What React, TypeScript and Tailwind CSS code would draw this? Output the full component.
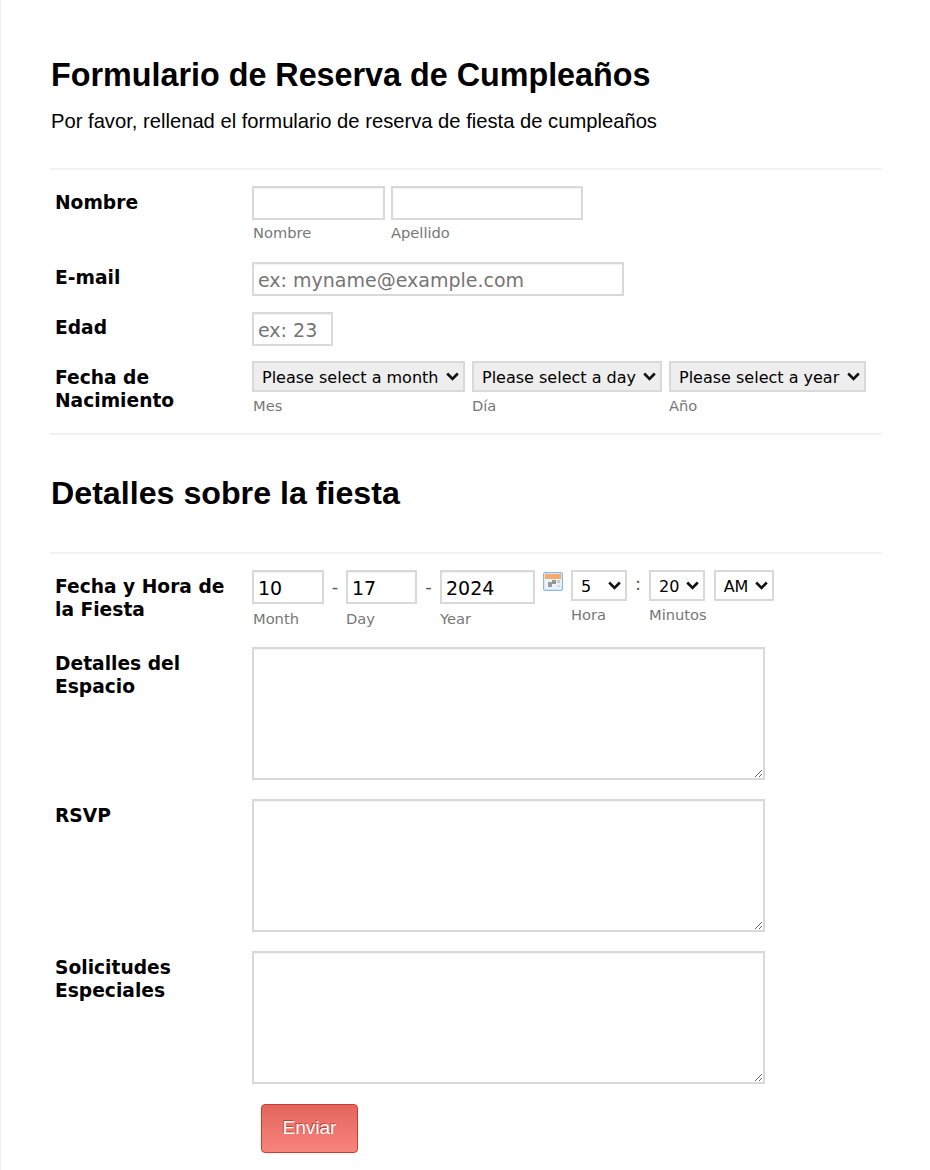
import type { ReactNode } from "react"

const labelClass = "w-[202px] shrink-0 pl-[5px] text-[18.67px] leading-[23px] font-bold text-black"
const inputClass = "h-[34px] border-2 border-[#d9d9d9] bg-white px-[4px] pt-px text-[19px] text-black shadow-[inset_0_1px_1px_#f2f2f2] outline-none placeholder:text-[#757575]"
const subClass = "mt-[4px] block text-[14.67px] leading-[18px] text-[#777777]"
const selectSubClass = "mt-[5px] block text-[14.67px] leading-[18px] text-[#777777]"
const areaClass = "block h-[133px] w-[513px] border-2 border-[#d9d9d9] bg-white shadow-[inset_0_1px_1px_#f2f2f2]"

function CalendarIcon() {
  return (
    <svg width="20" height="19" viewBox="0 0 20 19" className="mt-[2px] shrink-0">
      <rect x="0.5" y="0.5" width="19" height="18" rx="1.5" fill="#d5e6f6" stroke="#8fb6de" />
      <rect x="2" y="2" width="16" height="5" fill="#f4ab6c" />
      <rect x="2" y="7" width="16" height="10" fill="#eaf3fa" />
      <rect x="5" y="10" width="4" height="5" fill="#9c9c9c" />
      <rect x="9" y="8" width="4" height="4" fill="#8f9a8c" />
      <rect x="14" y="8" width="3" height="3" fill="#c2cbd3" />
      <rect x="14" y="13" width="3" height="2" fill="#cfd8e0" />
    </svg>
  )
}

function Select({ value, width, gray }: { value: string; width: string; gray?: boolean }) {
  return (
    <div className={"relative h-[31px] " + width}>
      <select
        defaultValue={value}
        className={
          "h-full w-full appearance-none border-2 border-[#d9d9d9] pt-[2px] pl-[8px] text-[16px] text-black " +
          (gray ? "bg-[#eeeeee]" : "bg-white")
        }
      >
        <option>{value}</option>
      </select>
      <svg
        width="13"
        height="9"
        viewBox="0 0 13 9"
        className="pointer-events-none absolute top-[11px] right-[6px]"
        fill="none"
        stroke="#111111"
        strokeWidth="2.6"
      >
        <path d="M1.2 1.5 6.5 6.8 11.8 1.5" />
      </svg>
    </div>
  )
}

function TextAreaRow({ label }: { label: ReactNode }) {
  return (
    <div className="flex">
      <label className={labelClass + " pt-[5px]"}>{label}</label>
      <textarea className={areaClass} />
    </div>
  )
}

export default function App() {
  return (
    <div className="min-h-[1170px] bg-white border-l border-[#f0f0f0] pl-[49px] pr-[49px] pt-[57px]" style={{ fontFamily: '"DejaVu Sans", sans-serif' }}>
      <h1 className="ml-px font-['Liberation_Sans',sans-serif] text-[32.3px] leading-[37px] font-bold text-black">
        Formulario de Reserva de Cumpleaños
      </h1>
      <p className="mt-[16px] ml-px font-['Liberation_Sans',sans-serif] text-[20.2px] leading-[23px] text-black">
        Por favor, rellenad el formulario de reserva de fiesta de cumpleaños
      </p>

      <div className="mt-[35px] border-t-2 border-[#f1f1f1] pt-[16px]">
        {/* Nombre */}
        <div className="flex">
          <label className={labelClass + " pt-[5px]"}>Nombre</label>
          <div className="flex gap-[6px]">
            <div>
              <input className={inputClass + " w-[133px]"} />
              <span className={subClass + " ml-px"}>Nombre</span>
            </div>
            <div>
              <input className={inputClass + " w-[192px]"} />
              <span className={subClass}>Apellido</span>
            </div>
          </div>
        </div>

        {/* E-mail */}
        <div className="mt-[20px] flex">
          <label className={labelClass + " pt-[4px]"}>E-mail</label>
          <input className={inputClass + " w-[372px]"} placeholder="ex: myname@example.com" />
        </div>

        {/* Edad */}
        <div className="mt-[16px] flex">
          <label className={labelClass + " pt-[4px]"}>Edad</label>
          <input className={inputClass + " w-[81px]"} placeholder="ex: 23" />
        </div>

        {/* Fecha de Nacimiento */}
        <div className="mt-[15px] flex">
          <label className={labelClass + " pt-[5px]"}>
            Fecha de
            <br />
            Nacimiento
          </label>
          <div className="flex gap-[7px]">
            <div>
              <Select value="Please select a month" width="w-[213px]" gray />
              <span className={selectSubClass + " ml-px"}>Mes</span>
            </div>
            <div>
              <Select value="Please select a day" width="w-[190px]" gray />
              <span className={selectSubClass}>Día</span>
            </div>
            <div>
              <Select value="Please select a year" width="w-[197px]" gray />
              <span className={selectSubClass}>Año</span>
            </div>
          </div>
        </div>
      </div>

      <div className="mt-[18px] border-t-2 border-[#f1f1f1] pt-[40px]">
        <h2 className="ml-px font-['Liberation_Sans',sans-serif] text-[32.2px] leading-[37px] font-bold text-black">
          Detalles sobre la fiesta
        </h2>
      </div>

      <div className="mt-[40px] border-t-2 border-[#f1f1f1] pt-[16px]">
        {/* Fecha y Hora */}
        <div className="flex">
          <label className={labelClass + " pt-[5px]"}>
            Fecha y Hora de
            <br />
            la Fiesta
          </label>
          <div className="flex">
            <div>
              <input className={inputClass + " w-[72px]"} defaultValue="10" />
              <span className={subClass + " mt-[6px] ml-px"}>Month</span>
            </div>
            <span className="w-[22px] pt-[3px] text-center text-[18px] text-[#555555]">-</span>
            <div>
              <input className={inputClass + " w-[71px]"} defaultValue="17" />
              <span className={subClass + " mt-[6px]"}>Day</span>
            </div>
            <span className="w-[23px] pt-[3px] text-center text-[18px] text-[#555555]">-</span>
            <div>
              <input className={inputClass + " w-[95px]"} defaultValue="2024" />
              <span className={subClass + " mt-[6px]"}>Year</span>
            </div>
            <div className="mx-[8px]">
              <CalendarIcon />
            </div>
            <div>
              <Select value="5" width="w-[56px]" />
              <span className={selectSubClass}>Hora</span>
            </div>
            <span className="w-[22px] text-center text-[18px] text-[#555555]">:</span>
            <div>
              <Select value="20" width="w-[56px]" />
              <span className={selectSubClass}>Minutos</span>
            </div>
            <div className="ml-[7px]">
              <Select value="AM" width="w-[60px]" />
            </div>
          </div>
        </div>

        <div className="mt-[19px] flex flex-col gap-[19px]">
          <TextAreaRow label={<>Detalles del<br />Espacio</>} />
          <TextAreaRow label="RSVP" />
          <TextAreaRow label={<>Solicitudes<br />Especiales</>} />
        </div>

        <div className="mt-[20px] pl-[211px]">
          <button className="h-[49px] w-[97px] rounded-[4px] border border-[#cc3b32] bg-gradient-to-b from-[#e3665e] to-[#f8847b] font-['Liberation_Sans',sans-serif] text-[19px] text-white [text-shadow:-1px_-1px_0_#b8433c]">
            Enviar
          </button>
        </div>
      </div>
    </div>
  )
}
